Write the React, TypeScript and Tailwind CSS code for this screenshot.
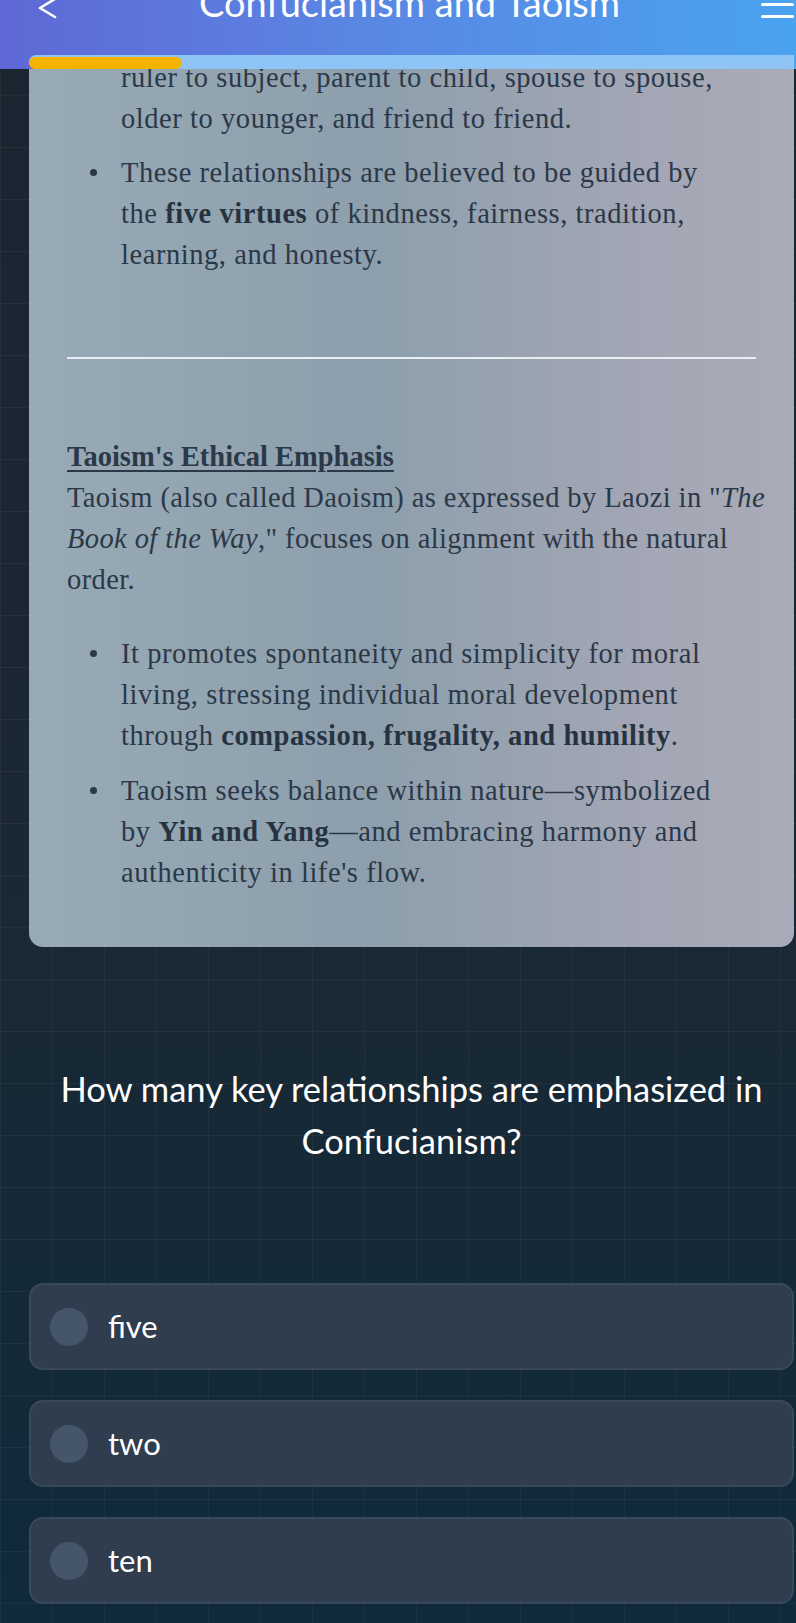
import React from 'react';

const serif = { fontFamily: '"Liberation Serif", "Times New Roman", serif' };
const sans = { fontFamily: 'Lato, "Noto Sans", sans-serif' };

const Dot: React.FC = () => (
  <div className="w-[54px] shrink-0 h-[41px] flex items-center">
    <span className="ml-[23px] w-[7px] h-[7px] rounded-full bg-[#2b3848]" />
  </div>
);

const Header: React.FC = () => (
  <header className="relative z-10 h-[69px] bg-[linear-gradient(90deg,#5f68d6_0%,#5a86e3_45%,#4aa3ef_100%)]" style={sans}>
    <div className="ml-[29px] w-[765px] h-[69px] flex flex-col">
      <div className="h-[55px] flex items-start justify-between">
        <div className="-mt-[4px] ml-[9px]">
          <svg width="20" height="24" viewBox="0 0 20 24" fill="none" stroke="white" strokeWidth="2.6" strokeLinecap="round" strokeLinejoin="round">
            <polyline points="17,3 2,12 17,21" />
          </svg>
        </div>
        <h1 className="-mt-[17px] text-[38px] leading-[38px] text-white font-normal whitespace-nowrap">
          Confucianism and Taoism
        </h1>
        <div className="-mt-[9px] flex flex-col gap-[9px]">
          <span className="block w-[33px] h-[3px] bg-white rounded-full" />
          <span className="block w-[33px] h-[3px] bg-white rounded-full" />
          <span className="block w-[33px] h-[3px] bg-white rounded-full" />
        </div>
      </div>
      <div className="h-[14px] bg-[#8fc4f6] rounded-l-full flex items-end">
        <div className="w-[153px] h-[12px] rounded-full bg-[#f5b301]" />
      </div>
    </div>
  </header>
);

const Card: React.FC = () => (
  <section
    className="rounded-b-[14px] bg-[linear-gradient(90deg,#97aab5_0%,#8d9fac_45%,#a3a6b4_80%,#aaabb8_100%)] px-[38px] pb-[54px] text-[#2b3848] text-[28.5px] leading-[41px] tracking-[0.56px]"
    style={serif}
  >
    <div className="-mt-[12px] pl-[54px] mr-[18px]">
      ruler to subject, parent to child, spouse to spouse, older to younger, and friend to friend.
    </div>
    <ul className="mt-[13px] mr-[18px]">
      <li className="flex">
        <Dot />
        <span>
          These relationships are believed to be guided by the <b className="text-[#26323f]">five virtues</b> of kindness, fairness, tradition, learning, and honesty.
        </span>
      </li>
    </ul>
    <hr className="mt-[82px] border-0 h-[2px] bg-[#e9eef2]" />
    <h2 className="mt-[77px] font-bold tracking-normal underline underline-offset-[4px] decoration-[1.5px]">Taoism's Ethical Emphasis</h2>
    <p className="-mr-[10px] tracking-[0.4px]">
      Taoism (also called Daoism) as expressed by Laozi in "<i>The Book of the Way</i>," focuses on alignment with the natural order.
    </p>
    <ul className="mt-[33px] mr-[18px] flex flex-col gap-[14px]">
      <li className="flex">
        <Dot />
        <span>
          It promotes spontaneity and simplicity for moral living, stressing individual moral development through{' '}
          <b className="text-[#26323f]">compassion, frugality, and humility</b>.
        </span>
      </li>
      <li className="flex">
        <Dot />
        <span>
          Taoism seeks balance within nature—symbolized by <b className="text-[#26323f]">Yin and Yang</b>—and embracing harmony and authenticity in life's flow.
        </span>
      </li>
    </ul>
  </section>
);

const options = ['five', 'two', 'ten'];

const Option: React.FC<{ label: string }> = ({ label }) => (
  <button className="h-[87px] w-full rounded-[14px] border-2 border-[#39485a] bg-[#2f3d4e] flex items-center pl-[19px] text-left">
    <span className="w-[38px] h-[38px] rounded-full bg-[#46566a] shrink-0" />
    <span className="ml-[20px] text-[31px] text-white" style={sans}>{label}</span>
  </button>
);

export default function App() {
  return (
    <div className="relative w-[796px] min-h-[1623px] overflow-hidden bg-[#142836]">
      <div className="absolute inset-0 bg-[linear-gradient(180deg,#1a2530_0%,#1a2834_55%,#0f2a3a_100%)]" />
      <div className="absolute inset-0 bg-[linear-gradient(90deg,rgba(255,255,255,0.045)_1px,transparent_1px),linear-gradient(0deg,rgba(255,255,255,0.045)_1px,transparent_1px)] bg-[size:52px_52px] bg-[position:0_-8px]" />
      <div className="relative">
        <Header />
        <main className="ml-[29px] w-[765px]">
          <Card />
          <h3
            className="my-[116px] text-center text-white text-[34.5px] leading-[52px] font-normal"
            style={sans}
          >
            How many key relationships are emphasized in Confucianism?
          </h3>
          <div className="flex flex-col gap-[30px] pb-[18px]">
            {options.map((o) => (
              <Option key={o} label={o} />
            ))}
          </div>
        </main>
      </div>
    </div>
  );
}
